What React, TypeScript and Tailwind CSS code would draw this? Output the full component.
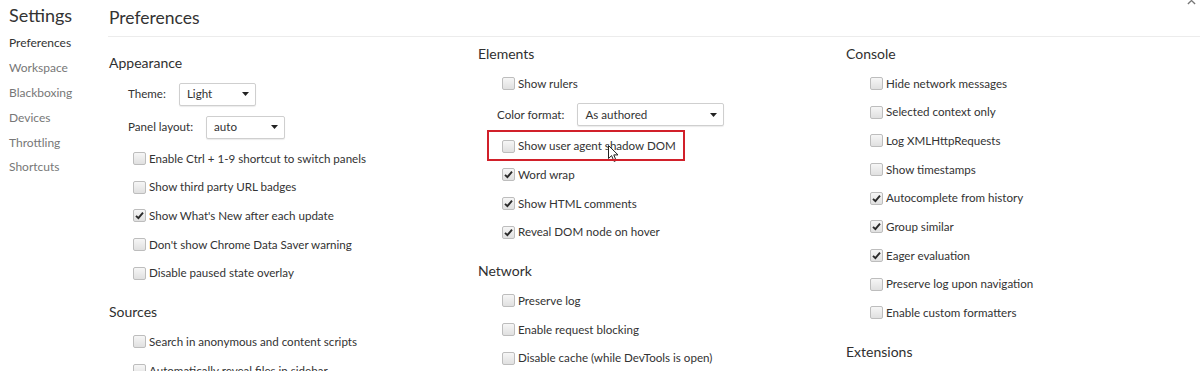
import type { ReactNode } from "react";

type Row =
  | { kind: "check"; label: string; checked?: boolean; highlight?: boolean }
  | { kind: "select"; label: string; value: string; width: string; tall?: boolean };

type Section = { title: string; rows: Row[] };

const sidebar = ["Preferences", "Workspace", "Blackboxing", "Devices", "Throttling", "Shortcuts"];

const col1: Section[] = [
  {
    title: "Appearance",
    rows: [
      { kind: "select", label: "Theme:", value: "Light", width: "w-[77px]" },
      { kind: "select", label: "Panel layout:", value: "auto", width: "w-[79px]", tall: true },
      { kind: "check", label: "Enable Ctrl + 1-9 shortcut to switch panels" },
      { kind: "check", label: "Show third party URL badges" },
      { kind: "check", label: "Show What's New after each update", checked: true },
      { kind: "check", label: "Don't show Chrome Data Saver warning" },
      { kind: "check", label: "Disable paused state overlay" },
    ],
  },
  {
    title: "Sources",
    rows: [
      { kind: "check", label: "Search in anonymous and content scripts" },
      { kind: "check", label: "Automatically reveal files in sidebar" },
    ],
  },
];

const col2: Section[] = [
  {
    title: "Elements",
    rows: [
      { kind: "check", label: "Show rulers" },
      { kind: "select", label: "Color format:", value: "As authored", width: "w-[147px]", tall: true },
      { kind: "check", label: "Show user agent shadow DOM", highlight: true },
      { kind: "check", label: "Word wrap", checked: true },
      { kind: "check", label: "Show HTML comments", checked: true },
      { kind: "check", label: "Reveal DOM node on hover", checked: true },
    ],
  },
  {
    title: "Network",
    rows: [
      { kind: "check", label: "Preserve log" },
      { kind: "check", label: "Enable request blocking" },
      { kind: "check", label: "Disable cache (while DevTools is open)" },
    ],
  },
];

const col3: Section[] = [
  {
    title: "Console",
    rows: [
      { kind: "check", label: "Hide network messages" },
      { kind: "check", label: "Selected context only" },
      { kind: "check", label: "Log XMLHttpRequests" },
      { kind: "check", label: "Show timestamps" },
      { kind: "check", label: "Autocomplete from history", checked: true },
      { kind: "check", label: "Group similar", checked: true },
      { kind: "check", label: "Eager evaluation", checked: true },
      { kind: "check", label: "Preserve log upon navigation" },
      { kind: "check", label: "Enable custom formatters" },
    ],
  },
  { title: "Extensions", rows: [] },
];

function Checkbox({ checked }: { checked?: boolean }) {
  return (
    <span className="relative w-[13px] h-[13px] shrink-0 rounded-[2px] border border-[#bdbdbd] bg-gradient-to-b from-[#f6f6f6] to-[#e0e0e0]">
      {checked && (
        <svg viewBox="0 0 13 13" className="absolute -left-px -top-px w-[13px] h-[13px]">
          <path d="M3 6.8 L5.4 9.2 L10 3.6" fill="none" stroke="#2a2a2a" strokeWidth="1.9" />
        </svg>
      )}
    </span>
  );
}

function Cursor() {
  return (
    <svg viewBox="0 0 12 18" className="absolute left-[90px] top-[8px] w-[12px] h-[18px]">
      <path
        d="M0.5 0.5 L0.5 13.5 L3.6 10.6 L6 16.4 L8.1 15.5 L5.8 9.9 L10 9.9 Z"
        fill="#fff"
        stroke="#222"
        strokeWidth="1"
        strokeLinejoin="round"
      />
    </svg>
  );
}

function SettingRow({ row }: { row: Row }) {
  if (row.kind === "select") {
    return (
      <div className={`flex items-center pl-[19px] ${row.tall ? "h-[34px]" : "h-[32px]"}`}>
        <span className="mr-[13px]">{row.label}</span>
        <div
          className={`${row.width} h-[23px] flex items-center justify-between pl-[7px] pr-[6px] border border-[#cfcfcf] rounded-[2px] bg-white shadow-[0_1px_1px_rgba(0,0,0,0.08)]`}
        >
          <span>{row.value}</span>
          <svg viewBox="0 0 7 4" className="w-[7px] h-[4px]">
            <path d="M0 0 H7 L3.5 4 Z" fill="#222" />
          </svg>
        </div>
      </div>
    );
  }
  return (
    <div className="relative flex items-center h-[28.7px] pl-[24px]">
      <Checkbox checked={row.checked} />
      <span className="ml-[3px] relative">
        {row.label}
        {row.highlight && <Cursor />}
      </span>
      {row.highlight && (
        <div className="absolute left-[9px] top-[-2px] w-[198px] h-[31px] border-2 border-[#d1202a]" />
      )}
    </div>
  );
}

function Column({ sections, offset }: { sections: Section[]; offset?: boolean }) {
  return (
    <div className={offset ? "pt-[9px]" : ""}>
      {sections.map((s, i) => (
        <div key={s.title} className={i > 0 ? "mt-[8px]" : ""}>
          <h3 className="h-[32px] flex items-center text-[14px] text-[#303030]">{s.title}</h3>
          {s.rows.map((r) => (
            <SettingRow key={r.label} row={r} />
          ))}
        </div>
      ))}
    </div>
  );
}

function Shell({ children }: { children: ReactNode }) {
  return (
    <div
      className="relative w-[1200px] h-[371px] overflow-hidden bg-white text-[11.6px] text-[#333] flex"
      style={{ fontFamily: "Lato, 'Noto Sans', sans-serif" }}
    >
      {children}
    </div>
  );
}

export default function App() {
  return (
    <Shell>
      <aside className="w-[108px] shrink-0 pl-[9px]">
        <div className="h-[31px] flex items-center text-[18px] text-[#333]">Settings</div>
        {sidebar.map((item, i) => (
          <div
            key={item}
            className={`h-[24.8px] flex items-center text-[12px] ${i === 0 ? "text-[#333]" : "text-[#777]"}`}
          >
            {item}
          </div>
        ))}
      </aside>
      <main className="flex-1">
        <header className="h-[37px] flex items-center pl-px border-b border-[#ececec] text-[17.5px] text-[#333]">
          Preferences
        </header>
        <div className="grid grid-cols-[369px_368px_1fr] pl-px">
          <Column sections={col1} offset />
          <Column sections={col2} />
          <Column sections={col3} />
        </div>
      </main>
      <svg viewBox="0 0 10 10" className="absolute right-[4px] top-[-4px] w-[9px] h-[9px]">
        <path d="M1 1 L9 9 M9 1 L1 9" stroke="#777" strokeWidth="1.5" />
      </svg>
    </Shell>
  );
}
